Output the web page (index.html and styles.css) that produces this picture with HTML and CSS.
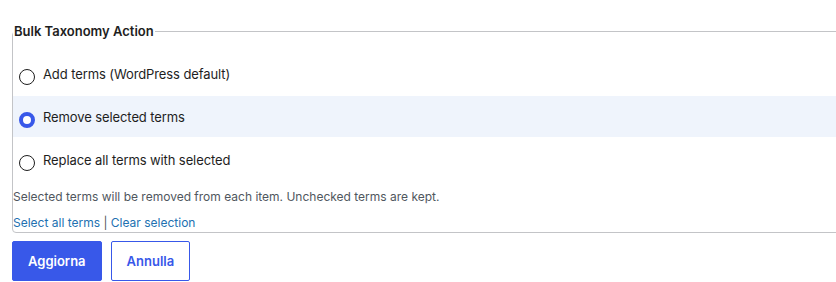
FILE: index.html
```html
<!DOCTYPE html>
<html lang="it">
  <head>
    <meta charset="UTF-8" />
    <title>Bulk Taxonomy Action</title>
    <link rel="stylesheet" href="styles.css">
  </head>
  <body>
    <form class="bulk-form">
      <fieldset class="bulk-box">
        <legend>Bulk Taxonomy Action</legend>

        <div class="options">
          <label class="option">
            <input type="radio" name="bulk_action" value="add">
            <span>Add terms (WordPress default)</span>
          </label>
          <label class="option is-active">
            <input type="radio" name="bulk_action" value="remove" checked>
            <span>Remove selected terms</span>
          </label>
          <label class="option">
            <input type="radio" name="bulk_action" value="replace">
            <span>Replace all terms with selected</span>
          </label>
        </div>

        <p class="help">Selected terms will be removed from each item. Unchecked terms are kept.</p>
        <p class="links"><a href="#">Select all terms</a> | <a href="#">Clear selection</a></p>
      </fieldset>

      <div class="actions">
        <button type="submit" class="btn btn-primary">Aggiorna</button>
        <button type="button" class="btn btn-secondary">Annulla</button>
      </div>
    </form>
  </body>
</html>
```

FILE: styles.css
```css
* {
  box-sizing: border-box;
}

html, body {
  margin: 0;
  padding: 0;
  overflow: hidden;
  background: #ffffff;
}

body {
  font-family: Inter, "Liberation Sans", Arial, sans-serif;
  font-size: 13px;
  color: #1e1e1e;
  padding: 18px 0 0 12px;
}

.bulk-box {
  margin: 0 -20px 8px 0;
  padding: 0;
  border: 1px solid #c3c4c7;
  border-radius: 4px;
  min-width: 0;
}

.bulk-box legend {
  font-weight: 600;
  font-size: 13px;
  line-height: 26px;
  padding: 0 1px;
  margin-left: 0;
}

.options {
  display: flex;
  flex-direction: column;
  gap: 2px;
  margin-top: 9px;
}

.option {
  display: flex;
  align-items: center;
  gap: 8px;
  height: 41px;
  padding: 0 6px;
  letter-spacing: -0.1px;
  cursor: pointer;
}

.option.is-active {
  background: #eff4fc;
}

.option input {
  appearance: none;
  -webkit-appearance: none;
  width: 16px;
  height: 16px;
  margin: 6px 0 0 0;
  border: 1.3px solid #1e1e1e;
  border-radius: 50%;
  background: #ffffff;
  flex-shrink: 0;
}

.option input:checked {
  border: 4.5px solid #3858e9;
}

.help {
  margin: 8px 0 0 0;
  font-size: 12px;
  line-height: 18px;
  color: #50575e;
}

.links {
  margin: 8px 0 0 0;
  font-size: 12px;
  line-height: 18px;
  color: #50575e;
}

.links a {
  color: #2271b1;
  text-decoration: none;
}

.actions {
  display: flex;
  gap: 9px;
}

.btn {
  height: 40px;
  padding: 0 15px;
  font-family: inherit;
  font-size: 13px;
  font-weight: 600;
  border-radius: 2px;
  cursor: pointer;
}

.btn-primary {
  background: #3858e9;
  border: 1px solid #3858e9;
  color: #ffffff;
}

.btn-secondary {
  background: #ffffff;
  border: 1px solid #3858e9;
  color: #3858e9;
}
```
